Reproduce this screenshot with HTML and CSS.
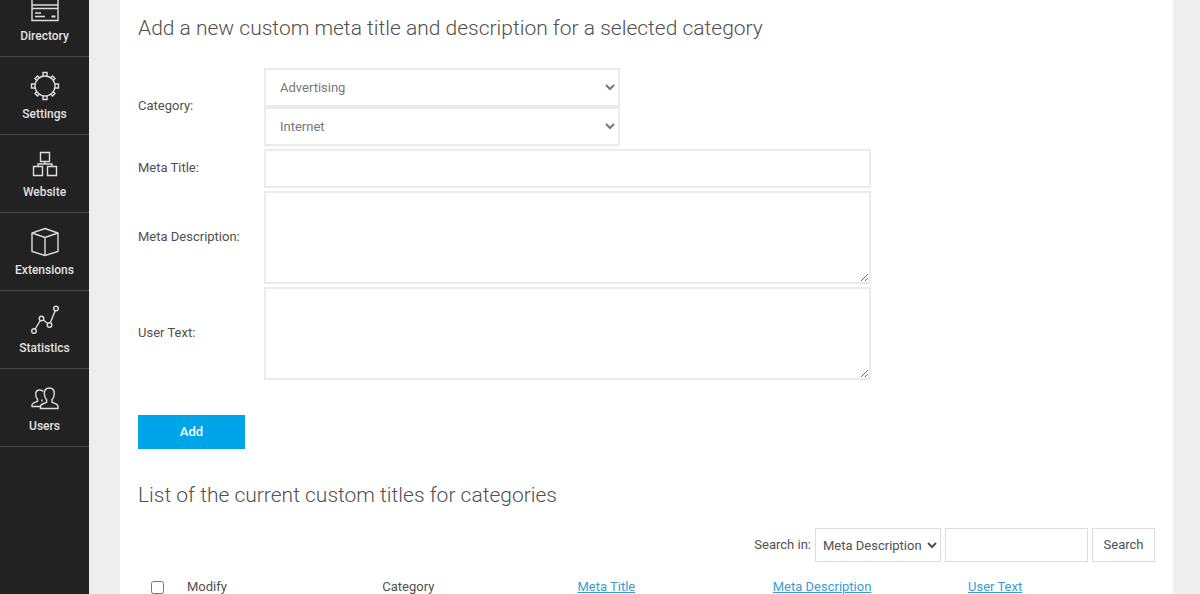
FILE: index.html
```html
<!DOCTYPE html>
<html lang="en">
<head>
<meta charset="utf-8">
<meta name="viewport" content="width=device-width, initial-scale=1">
<title>Category meta titles</title>
<link rel="stylesheet" href="styles.css">
</head>
<body>
<div class="app">
  <nav class="sidebar">
    <ul class="menu">
      <li><a href="#directory"><svg class="icon" viewBox="0 0 30 30"><path d="M2 1.500h26v26H2zM2 12h26M2 15.500h26M5 20h6M5 23.500h10"/><path class="thick" d="M21.500 23.500h4"/></svg>Directory</a></li>
      <li><a href="#settings"><svg class="icon" viewBox="0 0 30 30"><circle cx="15" cy="15" r="10"/><path d="M13 5V1.500h4V5M13 25v3.500h4V25M5 13H1.500v4H5M25 13h3.500v4H25M6.700 9.300L5 7.500l2.500-2.500 1.800 1.700M20.700 6.700L22.500 5 25 7.500l-1.700 1.800M23.300 20.700l1.700 1.800-2.500 2.500-1.800-1.700M9.300 23.300L7.500 25 5 22.500l1.700-1.800"/></svg>Settings</a></li>
      <li><a href="#website"><svg class="icon" viewBox="0 0 30 30"><path d="M10.500 3.500h9v9h-9zM3.500 17.500h9v9h-9zM17.500 17.500h9v9h-9zM15 12.500V15M8 17.500V15h14v2.500"/></svg>Website</a></li>
      <li><a href="#extensions"><svg class="icon" viewBox="0 0 30 30"><path d="M15 1.500l13 4.500v18.500L15 28.500 2 24.500V6zM2 6l13 4.500L28 6M15 10.500v18"/></svg>Extensions</a></li>
      <li><a href="#statistics"><svg class="icon" viewBox="0 0 30 30"><circle cx="4" cy="26" r="2.300"/><circle cx="11.500" cy="13.500" r="2.300"/><circle cx="19.500" cy="20" r="2.300"/><circle cx="26" cy="3.500" r="2.300"/><path d="M5.200 24l5.100-8.500M13.300 15l4.400 3.500M20.300 17.800l4.900-12.100"/></svg>Statistics</a></li>
      <li><a href="#users"><svg class="icon" viewBox="0 0 30 30"><path d="M10.500 25.500h17.500v-2c0-2-1.500-2.500-6-4.200v-2.500c1.500-1.800 2.300-4 2.300-6.300 0-3.500-1.500-5.500-5-5.500s-5 2-5 5.500c0 2.300.8 4.500 2.300 6.300v2.500c-4.500 1.700-6.100 2.200-6.100 4.200zM10 23.500H2v-1.500c0-1.800 1.500-2.200 5.500-3.700v-2C6.200 14.800 5.700 13 5.700 11.200c0-2.700 1.300-4.200 4-4.200 1.600 0 2.700.500 3.400 1.500M12 16.500v2"/></svg>Users</a></li>
    </ul>
  </nav>
  <main class="page">
    <section class="panel">
      <h2>Add a new custom meta title and description for a selected category</h2>
      <form class="meta-form">
        <div class="row">
          <label for="category">Category:</label>
          <div class="selects">
            <select class="field" id="category"><option>Advertising</option></select>
            <select class="field" id="subcategory" aria-label="Subcategory"><option>Internet</option></select>
          </div>
        </div>
        <div class="row">
          <label for="meta-title">Meta Title:</label>
          <input class="field" type="text" id="meta-title">
        </div>
        <div class="row">
          <label for="meta-description">Meta Description:</label>
          <textarea class="field area" id="meta-description"></textarea>
        </div>
        <div class="row">
          <label for="user-text">User Text:</label>
          <textarea class="field area" id="user-text"></textarea>
        </div>
        <button class="add" type="button">Add</button>
      </form>
      <h2>List of the current custom titles for categories</h2>
      <form class="search">
        <label for="search-in">Search in:</label>
        <select class="search-select" id="search-in"><option>Meta Description</option></select>
        <input class="search-text" type="text" aria-label="Search text">
        <button class="search-button" type="button">Search</button>
      </form>
      <table class="titles">
        <thead>
          <tr>
            <th class="check" scope="col"><input type="checkbox" aria-label="Select all"></th>
            <th scope="col">Modify</th>
            <th scope="col">Category</th>
            <th scope="col"><a href="#title">Meta Title</a></th>
            <th scope="col"><a href="#description">Meta Description</a></th>
            <th class="last" scope="col"><a href="#text">User Text</a></th>
          </tr>
        </thead>
      </table>
    </section>
  </main>
</div>
</body>
</html>
```
FILE: styles.css
```css
* {
  box-sizing: border-box;
}

body {
  margin: 0;
  background: #eee;
  color: #505050;
  font: 13px/20px Roboto, sans-serif;
}

button,
input,
select,
textarea {
  margin: 0;
  font: inherit;
  color: inherit;
  border-radius: 0;
}

.app {
  display: flex;
  height: 100vh;
  overflow: hidden;
}

.sidebar {
  flex: 0 0 89px;
  background: #222;
}

.menu {
  margin: -21px 0 0;
  padding: 0;
  list-style: none;
}

.menu a {
  display: flex;
  flex-direction: column;
  align-items: center;
  gap: 3px;
  height: 78px;
  padding-top: 14px;
  border-bottom: 1px solid #484848;
  color: #e0e0e0;
  font-size: 12px;
  font-weight: 500;
  text-decoration: none;
}

.icon {
  width: 30px;
  height: 30px;
  fill: none;
  stroke: #ddd;
  stroke-width: 1.4;
}

.thick {
  stroke-width: 2;
}

.page {
  flex: 1;
  padding: 0 27px 0 31px;
}

.panel {
  min-height: 100vh;
  padding: 14px 18px;
  background: #fff;
}

h2 {
  margin: 0;
  font-size: 21px;
  font-weight: 300;
  line-height: 28px;
}

.meta-form {
  display: flex;
  flex-direction: column;
  gap: 3px;
  padding: 26px 0 32px;
}

.row {
  display: grid;
  grid-template-columns: 126px minmax(0, 607px);
  align-items: center;
}

.row label {
  padding-bottom: 2px;
}

.selects {
  display: flex;
  flex-direction: column;
  max-width: 356px;
}

.field {
  width: 100%;
  height: 39px;
  padding: 0 14px;
  border: 2px solid #ebebeb;
  background: #fff;
  color: #777;
}

select.field {
  padding: 0 0 0 10px;
}

.area {
  display: block;
  height: 93px;
  padding: 8px 14px;
}

.add {
  align-self: flex-start;
  width: 107px;
  height: 34px;
  margin-top: 32px;
  border: 0;
  background: #00a4e9;
  color: #fff;
  font-weight: 500;
}

.search {
  display: flex;
  justify-content: flex-end;
  align-items: center;
  gap: 4px;
  padding-top: 19px;
}

.search-select,
.search-text,
.search-button {
  height: 34px;
  border: 1px solid #ddd;
  background: #fff;
}

.search-select {
  width: 126px;
  padding: 0 0 0 3px;
}

.search-text {
  width: 143px;
}

.search-button {
  width: 63px;
}

.titles {
  width: 100%;
  margin-top: 15px;
  border-collapse: collapse;
  table-layout: fixed;
}

.titles th {
  width: 19.2%;
  padding: 0;
  font-weight: 400;
  text-align: left;
}

.titles .check {
  width: 49px;
  padding-left: 13px;
}

.titles .last {
  width: auto;
}

.titles input {
  display: block;
}

.titles a {
  color: #3b9ad9;
}
```
